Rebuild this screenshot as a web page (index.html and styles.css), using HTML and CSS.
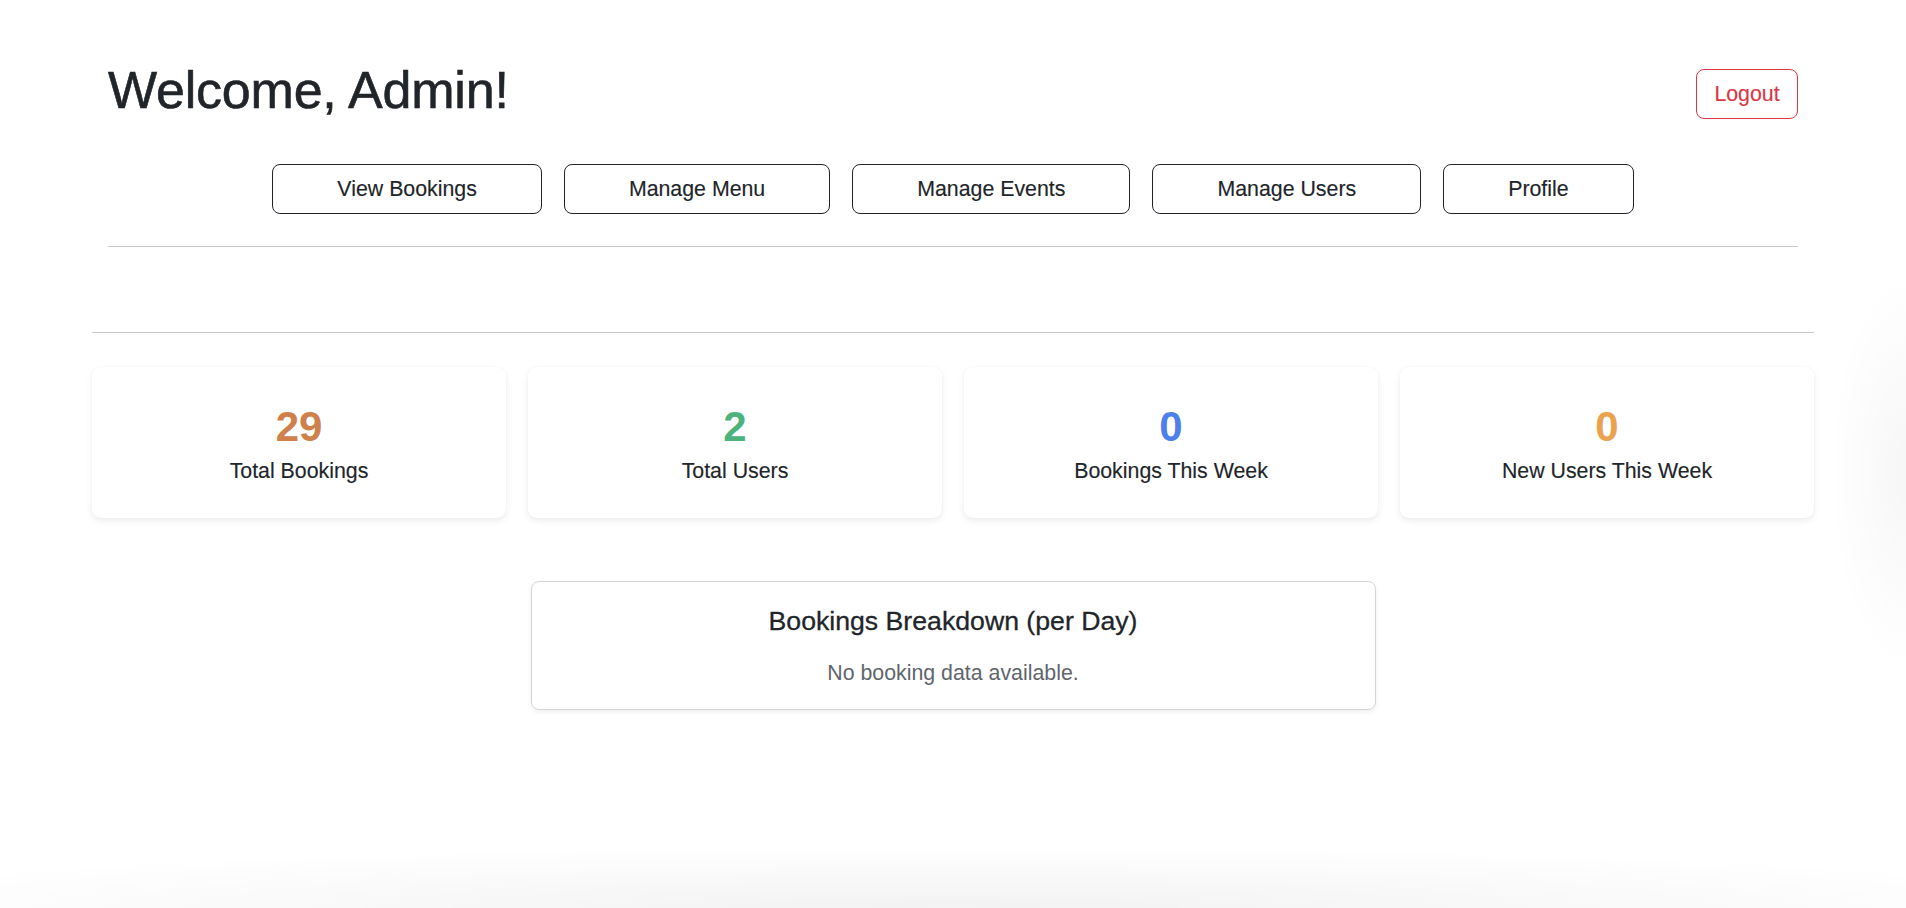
FILE: index.html
```html
<!DOCTYPE html>
<html lang="en">
<head>
<meta charset="utf-8">
<title>Admin Dashboard</title>
<link rel="stylesheet" href="styles.css">
</head>
<body>
  <div class="top">
    <header class="header">
      <h1 class="welcome">Welcome, Admin!</h1>
      <button class="btn btn-logout">Logout</button>
    </header>
    <nav class="nav">
      <button class="btn btn-nav">View Bookings</button>
      <button class="btn btn-nav">Manage Menu</button>
      <button class="btn btn-nav">Manage Events</button>
      <button class="btn btn-nav">Manage Users</button>
      <button class="btn btn-nav">Profile</button>
    </nav>
    <hr class="rule">
  </div>

  <main class="main">
    <hr class="rule rule-wide">
    <section class="stats">
      <div class="stat-card">
        <div class="stat-num c-brown">29</div>
        <div class="stat-label">Total Bookings</div>
      </div>
      <div class="stat-card">
        <div class="stat-num c-green">2</div>
        <div class="stat-label">Total Users</div>
      </div>
      <div class="stat-card">
        <div class="stat-num c-blue">0</div>
        <div class="stat-label">Bookings This Week</div>
      </div>
      <div class="stat-card">
        <div class="stat-num c-orange">0</div>
        <div class="stat-label">New Users This Week</div>
      </div>
    </section>

    <section class="breakdown">
      <h5 class="breakdown-title">Bookings Breakdown (per Day)</h5>
      <p class="breakdown-empty">No booking data available.</p>
    </section>
  </main>
</body>
</html>
```

FILE: styles.css
```css
* { box-sizing: border-box; }

html {
  height: 100%;
  background-color: #ffffff;
  background-image:
    radial-gradient(ellipse 62% 7% at 50% 100%, rgba(0,0,0,0.05), rgba(0,0,0,0) 100%),
    radial-gradient(ellipse 4% 22% at 100% 52%, rgba(0,0,0,0.035), rgba(0,0,0,0) 100%);
}

body {
  margin: 0;
  min-height: 100%;
  font-family: "Liberation Sans", Arial, sans-serif;
  color: #212529;
  font-size: 21.33px;
  line-height: 32px;
}

.top {
  width: 1690px;
  margin: 0 auto;
  padding-top: 58px;
}

.header {
  display: flex;
  justify-content: space-between;
  align-items: flex-start;
}

.welcome {
  margin: 0;
  font-size: 52px;
  line-height: 64px;
  font-weight: 400;
  letter-spacing: -0.2px;
  color: #212529;
  -webkit-text-stroke: 0.6px #212529;
}

.btn {
  font-family: "Liberation Sans", Arial, sans-serif;
  font-size: 21.33px;
  line-height: 32px;
  height: 50px;
  background: #fff;
  border-radius: 8px;
  cursor: pointer;
  -webkit-text-stroke: 0.15px currentColor;
}

.btn-logout {
  margin-top: 11px;
  padding: 0 17px;
  width: 102px;
  color: #dc3545;
  border: 1.33px solid #dc3545;
}

.nav {
  display: flex;
  justify-content: center;
  gap: 22px;
  margin-top: 42px;
}

.btn-nav {
  padding: 0 64px;
  color: #212529;
  border: 1.33px solid #212529;
}

.rule {
  border: 0;
  border-top: 1.33px solid #c8c9ca;
  margin: 32px 0 0 0;
}

.main {
  width: 1722px;
  margin: 0 auto;
}

.rule-wide {
  margin-top: 85px;
}

.stats {
  display: grid;
  grid-template-columns: repeat(4, 1fr);
  gap: 22px;
  margin-top: 34px;
}

.stat-card {
  background: #fff;
  border-radius: 9px;
  box-shadow: 0 3px 7px rgba(0,0,0,0.075), 0 0 2px rgba(0,0,0,0.04);
  padding: 35px 0 31px;
  text-align: center;
}

.stat-num {
  font-size: 42px;
  line-height: 50px;
  font-weight: 700;
}

.stat-label {
  font-size: 21.33px;
  line-height: 32px;
  margin-top: 3px;
  -webkit-text-stroke: 0.15px currentColor;
}

.c-brown { color: #d0804a; }
.c-green { color: #4cb37c; }
.c-blue { color: #4e80ec; }
.c-orange { color: #eba24f; }

.breakdown {
  width: 845px;
  margin: 63px auto 0;
  border: 1.33px solid #d3d4d5;
  border-radius: 8px;
  box-shadow: 0 2px 5px rgba(0,0,0,0.07);
  padding: 23px 0 20px;
  text-align: center;
}

.breakdown-title {
  margin: 0 0 20px;
  font-size: 26.67px;
  line-height: 32px;
  font-weight: 400;
  color: #212529;
  -webkit-text-stroke: 0.3px #212529;
}

.breakdown-empty {
  margin: 0;
  color: #5f656b;
  font-size: 21.33px;
  line-height: 32px;
}
```
